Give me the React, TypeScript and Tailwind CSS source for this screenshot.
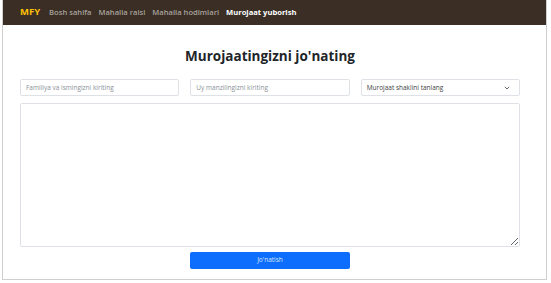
import React from 'react';

const links = ['Bosh sahifa', 'Mahalla raisi', 'Mahalla hodimlari'];

const App: React.FC = () => {
  return (
    <div className="w-[551px] h-[283px] bg-white font-['Open_Sans',sans-serif]">
      <div className="ml-[2px] w-[545px] h-[280px] border-x border-b border-[#cfcfcf] flex flex-col">
        <nav className="h-[25px] bg-[#3a2e25] flex items-center pl-[17px] gap-[7px]">
          <span className="text-[#ffc107] font-bold text-[9.5px] mr-[2px]">MFY</span>
          {links.map((l) => (
            <span key={l} className="text-[#a9a29c] text-[7.6px] font-semibold">
              {l}
            </span>
          ))}
          <span className="text-white text-[7.6px] font-bold">Murojaat yuborish</span>
        </nav>

        <div className="w-[500px] ml-[17px] flex flex-col">
          <h1 className="text-center text-[13.5px] font-bold text-[#212529] mt-[21px] leading-[20px]">
            Murojaatingizni jo'nating
          </h1>

          <div className="grid grid-cols-3 gap-[11px] mt-[13px]">
            <input
              className="h-[17px] border border-[#dee2e6] rounded-[2px] px-[5px] text-[6.5px] placeholder:text-[#8a9097] outline-none"
              placeholder="Familiya va ismingizni kiriting"
            />
            <input
              className="h-[17px] border border-[#dee2e6] rounded-[2px] px-[5px] text-[6.5px] placeholder:text-[#8a9097] outline-none"
              placeholder="Uy manzilingizni kiriting"
            />
            <div className="h-[17px] border border-[#dee2e6] rounded-[2px] px-[5px] flex items-center justify-between text-[6.5px] text-[#3b3f44]">
              <span>Murojaat shaklini tanlang</span>
              <svg width="6" height="4" viewBox="0 0 6 4" className="mr-[4px]">
                <path d="M0.8 0.8 L3 3 L5.2 0.8" fill="none" stroke="#555" strokeWidth="0.9" />
              </svg>
            </div>
          </div>

          <textarea className="mt-[7px] h-[144px] border border-[#dee2e6] rounded-[2px] outline-none" />

          <div className="flex justify-center mt-[5px]">
            <button className="w-[160px] h-[17px] bg-[#0d6efd] rounded-[2px] text-[#d6e6ff] text-[6.5px] leading-none">
              Jo'natish
            </button>
          </div>
        </div>
      </div>
    </div>
  );
};

export default App;
